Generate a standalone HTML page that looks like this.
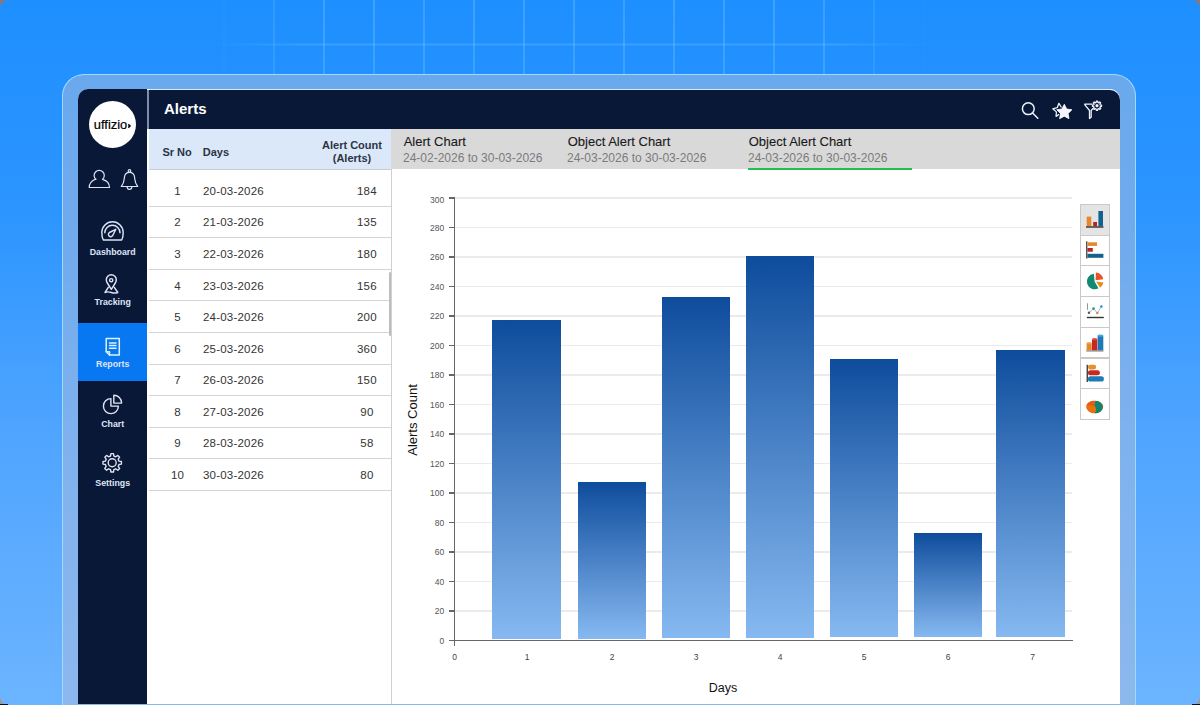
<!DOCTYPE html>
<html><head><meta charset="utf-8">
<style>
*{margin:0;padding:0;box-sizing:border-box}
html,body{width:1200px;height:705px;overflow:hidden}
body{position:relative;font-family:"Liberation Sans",sans-serif;background:linear-gradient(180deg,#1e8fff 0%,#2c95ff 30%,#4ea4ff 60%,#6cb4ff 100%)}
div,svg{position:absolute}
#grid{left:0;top:0;width:1200px;height:75px;
 background-image:linear-gradient(90deg,rgba(110,195,255,.36) 2px,transparent 2px),linear-gradient(0deg,rgba(110,195,255,.3) 2px,transparent 2px);
 background-size:50px 50px;background-position:23px 0,0 45.5px;
 -webkit-mask-image:linear-gradient(90deg,transparent 210px,#000 310px,#000 830px,transparent 935px)}
#card{left:62px;top:74px;width:1074px;height:700px;border-radius:22px;border:1px solid rgba(160,222,255,.95);background:rgba(165,188,222,.55)}
#app{left:78px;top:89px;width:1042px;height:640px;border-radius:10px;overflow:hidden;background:#fff}
#side{left:78px;top:89px;width:69.4px;height:620px;background:#0a1838;border-top-left-radius:10px}
#divv{left:147px;top:90px;width:2px;height:39px;background:#7f8ca8}
#head{left:149px;top:90px;width:971px;height:38.7px;background:#0a1838;border-top-right-radius:10px}
#title{left:164px;top:100px;color:#fff;font-size:15px;font-weight:bold}
#tbl{left:147px;top:129px;width:245px;height:600px;background:#fff;border-right:1px solid #d0d0d0}
#thead{left:149px;top:129px;width:242px;height:41px;background:#dbe8fa;border-bottom:1px solid #c8cdd4}
.th{font-size:11px;color:#2c3444;font-weight:bold}
.tnum{left:157.6px;width:40px;text-align:center;font-size:11.5px;letter-spacing:.2px;color:#333;line-height:14px;margin-top:-3.1px}
.tday{left:203px;font-size:11.5px;letter-spacing:.2px;color:#333;line-height:14px;margin-top:-3.1px}
.tcnt{left:336.9px;width:60px;text-align:center;font-size:11.5px;letter-spacing:.2px;color:#333;line-height:14px;margin-top:-3.1px}
.tline{left:149px;width:242px;height:1px;background:#d4d4d4}
#sb{left:388.5px;top:271.5px;width:2.6px;height:64px;background:#bdbdbd;border-radius:2px}
#tabs{left:391px;top:128.7px;width:729px;height:40px;background:#d9d9d9}
.tt{font-size:13px;color:#1a1a1a;-webkit-text-stroke:0.12px #1a1a1a;margin-left:0.7px}
.td{font-size:12px;color:#7b7b7b}
.lbl{color:#dfe5f6;font-size:8.8px;font-weight:bold;text-align:center;width:69px;left:78.2px;margin-top:0.9px}
.grid{left:455px;width:617px;height:1.5px;background:#ebebeb}
.tick{left:449px;width:6px;height:1.5px;background:#666}
.ylab{left:400px;width:44.3px;text-align:right;font-size:8.5px;color:#555;line-height:8px;margin-top:-3.5px}
.xlab{top:653.3px;width:40px;text-align:center;font-size:8.5px;color:#444;line-height:8px}
.bar{width:68.7px;background:linear-gradient(180deg,#0e4c9c,#86b9f1)}
#yaxis{left:453.7px;top:197px;width:1.8px;height:449px;background:#666}
#xaxis{left:449px;top:639.6px;width:623.5px;height:1.8px;background:#666}
#ytitle{left:372.5px;top:413px;width:80px;text-align:center;font-size:13px;color:#111;transform:rotate(-90deg);line-height:14px}
#xtitle{left:679px;top:680.5px;width:88px;text-align:center;font-size:12.5px;color:#111}
.ib{left:1080px;width:30px;height:31.7px;border:1px solid #c9c9c9;background:#fff}

</style></head><body>
<div id="grid"></div>
<div id="card"></div>
<div id="app"></div>
<div style="left:78px;top:703.5px;width:1042px;height:2px;background:#80b9f0;z-index:5"></div>
<div id="side"></div>
<div style="left:89px;top:101px;width:47px;height:47px;border-radius:50%;background:#fff"></div>
<div style="left:78px;top:323px;width:69px;height:58px;background:#0877f2"></div>
<div class="lbl" style="top:246px">Dashboard</div>
<div class="lbl" style="top:296.1px">Tracking</div>
<div class="lbl" style="top:358.1px">Reports</div>
<div class="lbl" style="top:418.4px">Chart</div>
<div class="lbl" style="top:477px">Settings</div>
<div id="divv"></div>
<div id="head"></div>
<div style="left:149px;top:89px;width:963px;height:1px;background:#d6ebff"></div>
<div id="title">Alerts</div>
<div id="tbl"></div>
<div id="thead"></div>
<div class="th" style="left:162.4px;top:146.2px">Sr No</div>
<div class="th" style="left:202.8px;top:146.2px">Days</div>
<div class="th" style="left:319px;top:139px;text-align:center;width:66px;line-height:13px">Alert Count<br>(Alerts)</div>
<div class="tnum" style="top:186.9px">1</div><div class="tday" style="top:186.9px">20-03-2026</div><div class="tcnt" style="top:186.9px">184</div><div class="tline" style="top:205.7px"></div>
<div class="tnum" style="top:218.48px">2</div><div class="tday" style="top:218.48px">21-03-2026</div><div class="tcnt" style="top:218.48px">135</div><div class="tline" style="top:237.28px"></div>
<div class="tnum" style="top:250.06px">3</div><div class="tday" style="top:250.06px">22-03-2026</div><div class="tcnt" style="top:250.06px">180</div><div class="tline" style="top:268.86px"></div>
<div class="tnum" style="top:281.64px">4</div><div class="tday" style="top:281.64px">23-03-2026</div><div class="tcnt" style="top:281.64px">156</div><div class="tline" style="top:300.44px"></div>
<div class="tnum" style="top:313.22px">5</div><div class="tday" style="top:313.22px">24-03-2026</div><div class="tcnt" style="top:313.22px">200</div><div class="tline" style="top:332.02px"></div>
<div class="tnum" style="top:344.8px">6</div><div class="tday" style="top:344.8px">25-03-2026</div><div class="tcnt" style="top:344.8px">360</div><div class="tline" style="top:363.6px"></div>
<div class="tnum" style="top:376.38px">7</div><div class="tday" style="top:376.38px">26-03-2026</div><div class="tcnt" style="top:376.38px">150</div><div class="tline" style="top:395.18px"></div>
<div class="tnum" style="top:407.96px">8</div><div class="tday" style="top:407.96px">27-03-2026</div><div class="tcnt" style="top:407.96px">90</div><div class="tline" style="top:426.76px"></div>
<div class="tnum" style="top:439.54px">9</div><div class="tday" style="top:439.54px">28-03-2026</div><div class="tcnt" style="top:439.54px">58</div><div class="tline" style="top:458.34px"></div>
<div class="tnum" style="top:471.12px">10</div><div class="tday" style="top:471.12px">30-03-2026</div><div class="tcnt" style="top:471.12px">80</div><div class="tline" style="top:489.92px"></div>
<div id="sb"></div>
<div id="tabs"></div>
<div class="tt" style="left:403px;top:134px">Alert Chart</div>
<div class="td" style="left:403px;top:151px">24-02-2026 to 30-03-2026</div>
<div class="tt" style="left:567px;top:134px">Object Alert Chart</div>
<div class="td" style="left:567px;top:151px">24-03-2026 to 30-03-2026</div>
<div class="tt" style="left:748px;top:134px">Object Alert Chart</div>
<div class="td" style="left:748px;top:151px">24-03-2026 to 30-03-2026</div>
<div style="left:748px;top:168px;width:164px;height:2px;background:#22c04a"></div>
<div class="tick" style="top:639.65px"></div>
<div class="ylab" style="top:640.4px">0</div>
<div class="grid" style="top:610.14px"></div>
<div class="tick" style="top:610.14px"></div>
<div class="ylab" style="top:610.89px">20</div>
<div class="grid" style="top:580.63px"></div>
<div class="tick" style="top:580.63px"></div>
<div class="ylab" style="top:581.38px">40</div>
<div class="grid" style="top:551.12px"></div>
<div class="tick" style="top:551.12px"></div>
<div class="ylab" style="top:551.87px">60</div>
<div class="grid" style="top:521.61px"></div>
<div class="tick" style="top:521.61px"></div>
<div class="ylab" style="top:522.36px">80</div>
<div class="grid" style="top:492.1px"></div>
<div class="tick" style="top:492.1px"></div>
<div class="ylab" style="top:492.85px">100</div>
<div class="grid" style="top:462.59px"></div>
<div class="tick" style="top:462.59px"></div>
<div class="ylab" style="top:463.34px">120</div>
<div class="grid" style="top:433.08px"></div>
<div class="tick" style="top:433.08px"></div>
<div class="ylab" style="top:433.83px">140</div>
<div class="grid" style="top:403.57px"></div>
<div class="tick" style="top:403.57px"></div>
<div class="ylab" style="top:404.32px">160</div>
<div class="grid" style="top:374.06px"></div>
<div class="tick" style="top:374.06px"></div>
<div class="ylab" style="top:374.81px">180</div>
<div class="grid" style="top:344.55px"></div>
<div class="tick" style="top:344.55px"></div>
<div class="ylab" style="top:345.3px">200</div>
<div class="grid" style="top:315.04px"></div>
<div class="tick" style="top:315.04px"></div>
<div class="ylab" style="top:315.79px">220</div>
<div class="grid" style="top:285.53px"></div>
<div class="tick" style="top:285.53px"></div>
<div class="ylab" style="top:286.28px">240</div>
<div class="grid" style="top:256.02px"></div>
<div class="tick" style="top:256.02px"></div>
<div class="ylab" style="top:256.77px">260</div>
<div class="grid" style="top:226.51px"></div>
<div class="tick" style="top:226.51px"></div>
<div class="ylab" style="top:227.26px">280</div>
<div class="grid" style="top:197.0px"></div>
<div class="tick" style="top:197.0px"></div>
<div class="ylab" style="top:199.05px">300</div>
<div class="bar" style="left:492px;top:319.5px;height:319.0px"></div>
<div class="bar" style="left:577.8px;top:482px;height:156.5px"></div>
<div class="bar" style="left:661.7px;top:297.2px;height:341.3px"></div>
<div class="bar" style="left:745.7px;top:256.3px;height:382.2px"></div>
<div class="bar" style="left:829.8px;top:358.7px;height:278.3px"></div>
<div class="bar" style="left:913.5px;top:532.5px;height:104.5px"></div>
<div class="bar" style="left:996.1px;top:349.7px;height:287.3px"></div>
<div class="xlab" style="left:434.5px">0</div>
<div class="xlab" style="left:507px">1</div>
<div class="xlab" style="left:592px">2</div>
<div class="xlab" style="left:676px">3</div>
<div class="xlab" style="left:760px">4</div>
<div class="xlab" style="left:844px">5</div>
<div class="xlab" style="left:928px">6</div>
<div class="xlab" style="left:1012.5px">7</div>
<div id="yaxis"></div>
<div id="xaxis"></div>
<div id="ytitle">Alerts Count</div>
<div id="xtitle">Days</div>
<div class="ib" style="top:204px;background:#e4e4e4"></div>
<div class="ib" style="top:234.7px"></div>
<div class="ib" style="top:265.4px"></div>
<div class="ib" style="top:296.1px"></div>
<div class="ib" style="top:326.8px"></div>
<div class="ib" style="top:357.5px"></div>
<div class="ib" style="top:388.2px"></div>
<svg width="1200" height="705" viewBox="0 0 1200 705" style="left:0;top:0">
 <!-- logo -->
 <text x="93.8" y="129" font-family="Liberation Sans" font-size="13.6" fill="#000" stroke="#000" stroke-width="0.22" textLength="33.4" lengthAdjust="spacingAndGlyphs">uffizio</text>
 <path d="M127.9,123.8 C129.6,124.4 130.6,125.1 130.9,125.9 C130.6,126.7 129.6,127.4 127.9,128 C128.5,126.7 128.5,125.1 127.9,123.8 Z" fill="#000"/>
 <g fill="none" stroke="#dde3f2" stroke-width="1.2" stroke-linejoin="round" stroke-linecap="round">
  <!-- user -->
  <path d="M95.9,179.4 A5.1,5.1 0 1 1 102.5,179.4 C106.5,180.5 109.5,183.5 109.5,187.5 L89.2,187.5 C89.2,183.5 92,180.5 95.9,179 Z"/>
  <!-- bell -->
  <circle cx="129.5" cy="171" r="1.3"/>
  <path d="M129.5,172.3 C132.3,172.3 134.3,174.2 134.6,177.4 C135,181 134.8,183 137.7,186.5 L121.3,186.5 C124.2,183 124,181 124.4,177.4 C124.7,174.2 126.7,172.3 129.5,172.3 Z"/>
  <path d="M127.2,187 A2.3,2.3 0 0 0 131.8,187"/>
 </g>
 <g fill="none" stroke="#dde3f2" stroke-width="1.45" stroke-linejoin="round" stroke-linecap="round" transform="translate(0,0.5)">
  <!-- gauge -->
  <path d="M103.3,239.5 C102,237 101.8,234.5 101.8,232 A10.7,10.7 0 0 1 123.2,232 C123.2,234.5 123,237 121.7,239.5 Z"/>
  <path d="M104.8,232.3 A7.6,7.6 0 0 1 120,232.3"/>
  <path d="M115.8,228.8 L112.6,235.2 A2.3,2.3 0 1 1 109.4,232 Z"/>
  <!-- pin -->
  <path d="M111.3,289.3 L107.3,283 C106.4,281.6 106.3,280.6 106.3,279.8 A5,5 0 0 1 116.3,279.8 C116.3,280.6 116.2,281.6 115.3,283 Z" transform="translate(0,-0.5)"/>
  <circle cx="111.2" cy="279.7" r="1.6"/>
  <path d="M108.3,286.8 L105,292 C107,291 109,291.2 111.3,292 C113.6,292.8 115.6,292.8 117.8,292 L114.3,286.8"/>
 </g>
 <g fill="none" stroke="#d9f3ff" stroke-width="1.5" stroke-linejoin="round" stroke-linecap="round">
  <!-- report doc -->
  <path d="M109.5,355 L119.3,355 L119.3,338.5 L106.2,338.5 L106.2,351.8 Z"/>
  <path d="M106.2,351.8 L109.5,351.8 L109.5,355"/>
  <path d="M109.5,343 L116,343 M109.5,345.6 L116,345.6 M109.5,348.3 L116,348.3"/>
 </g>
 <g fill="none" stroke="#dde3f2" stroke-width="1.4" stroke-linejoin="round" stroke-linecap="round">
  <!-- pie -->
  <path d="M110.9,398.6 A7.5,7.5 0 1 0 118.4,406.1 L110.9,406.1 Z"/>
  <path d="M113.8,395.3 A7.8,7.8 0 0 1 121.6,403.1 L113.8,403.1 Z"/>
  <!-- gear -->
  <path d="M118.99,461.11 L121.41,461.53 L121.41,464.07 L118.99,464.49 L118.20,466.41 L119.62,468.41 L117.81,470.22 L115.81,468.80 L113.89,469.59 L113.47,472.01 L110.93,472.01 L110.51,469.59 L108.59,468.80 L106.59,470.22 L104.78,468.41 L106.20,466.41 L105.41,464.49 L102.99,464.07 L102.99,461.53 L105.41,461.11 L106.20,459.19 L104.78,457.19 L106.59,455.38 L108.59,456.80 L110.51,456.01 L110.93,453.59 L113.47,453.59 L113.89,456.01 L115.81,456.80 L117.81,455.38 L119.62,457.19 L118.20,459.19Z"/>
  <circle cx="112.2" cy="462.8" r="4"/>
 </g>
 <!-- header icons -->
 <g fill="none" stroke="#eef2fb" stroke-width="1.5" stroke-linecap="round" stroke-linejoin="round">
  <circle cx="1028.3" cy="108.7" r="5.9"/>
  <path d="M1032.6,113 L1037.8,118.3"/>
  <path d="M1058.87,103.34 L1061.35,107.27 L1065.99,107.45 L1063.02,111.03 L1064.28,115.50 L1059.97,113.78 L1056.10,116.36 L1056.40,111.72 L1052.75,108.84 L1057.26,107.70Z" stroke-width="1.3"/>
 </g>
 <path d="M1064.30,104.20 L1066.65,108.96 L1071.91,109.73 L1068.10,113.44 L1069.00,118.67 L1064.30,116.20 L1059.60,118.67 L1060.50,113.44 L1056.69,109.73 L1061.95,108.96Z" fill="#f4f6fb" stroke="#0a1838" stroke-width="2.2" stroke-linejoin="round" paint-order="stroke"/>
 <path d="M1064.30,104.20 L1066.65,108.96 L1071.91,109.73 L1068.10,113.44 L1069.00,118.67 L1064.30,116.20 L1059.60,118.67 L1060.50,113.44 L1056.69,109.73 L1061.95,108.96Z" fill="#f4f6fb" stroke="#f4f6fb" stroke-width="0.7" stroke-linejoin="round"/>
 <g fill="none" stroke="#eef2fb" stroke-width="1.3" stroke-linejoin="round">
  <path d="M1084.3,104.2 L1092.5,104.2 M1084.3,104.2 L1089.5,110.5 L1089.5,118.5 L1091.2,117.2 L1091.2,110.5 L1093,108.3"/>
  <path transform="translate(0,0.7)" d="M1100.30,104.18 L1101.56,104.37 L1101.56,105.63 L1100.30,105.82 L1099.91,106.75 L1100.67,107.78 L1099.78,108.67 L1098.75,107.91 L1097.82,108.30 L1097.63,109.56 L1096.37,109.56 L1096.18,108.30 L1095.25,107.91 L1094.22,108.67 L1093.33,107.78 L1094.09,106.75 L1093.70,105.82 L1092.44,105.63 L1092.44,104.37 L1093.70,104.18 L1094.09,103.25 L1093.33,102.22 L1094.22,101.33 L1095.25,102.09 L1096.18,101.70 L1096.37,100.44 L1097.63,100.44 L1097.82,101.70 L1098.75,102.09 L1099.78,101.33 L1100.67,102.22 L1099.91,103.25Z"/>
 </g>
 <circle cx="1097" cy="105.7" r="1.6" fill="#eef2fb"/>
 <!-- chart type icons -->
 <g>
  <rect x="1086.7" y="216.6" width="4.6" height="9.6" fill="#e8862c"/>
  <rect x="1093.2" y="222" width="3.8" height="4.2" fill="#b8231e"/>
  <rect x="1098.4" y="211" width="4.6" height="15.2" fill="#13618c"/>
  <rect x="1086" y="226.3" width="17.5" height="1.4" fill="#333"/>
 </g>
 <g>
  <rect x="1086" y="241.3" width="1.4" height="17.2" fill="#555"/>
  <rect x="1087.4" y="242.3" width="9.6" height="3.6" fill="#e8862c"/>
  <rect x="1087.4" y="248" width="5.4" height="3.7" fill="#b8231e"/>
  <rect x="1087.4" y="253.8" width="16" height="4" fill="#13618c"/>
 </g>
 <g>
  <path d="M1094.6,281.5 L1093.92,273.73 A7.8,7.8 0 1 0 1098.5,288.25 Z" fill="#128a72"/>
  <path d="M1095.6,280.2 L1095.87,272.6 A7.6,7.6 0 0 1 1103.13,279.14 Z" fill="#e8532a"/>
  <path d="M1096.2,281.6 L1103.43,282.62 A7.3,7.3 0 0 1 1100.07,287.79 Z" fill="#e88a1c"/>
 </g>
 <g>
  <rect x="1086.8" y="316.8" width="17" height="1.4" fill="#333"/>
  <rect x="1087.1" y="303.3" width="0.9" height="6.5" fill="#888"/>
  <polyline points="1089,312.8 1093.5,308.6 1097.3,313 1101.4,306.5" fill="none" stroke="#6cb3d9" stroke-width="0.8"/>
  <circle cx="1089" cy="312.8" r="1.2" fill="#555"/>
  <circle cx="1093.5" cy="308.6" r="1.3" fill="#1aa06a"/>
  <circle cx="1097.3" cy="313" r="1.3" fill="#e8862c"/>
  <circle cx="1101.4" cy="306.5" r="1.3" fill="#2b8fcc"/>
 </g>
 <g>
  <rect x="1086.6" y="343.2" width="5.1" height="7.3" fill="#e8862c"/>
  <ellipse cx="1089.15" cy="343.2" rx="2.55" ry="1.1" fill="#f3a45a"/>
  <rect x="1092" y="339.2" width="5.3" height="11.3" fill="#c8281f"/>
  <ellipse cx="1094.65" cy="339.2" rx="2.65" ry="1.1" fill="#e25040"/>
  <rect x="1097.6" y="335.6" width="5.7" height="14.9" fill="#1e79b5"/>
  <ellipse cx="1100.45" cy="335.6" rx="2.85" ry="1.2" fill="#48a8e0"/>
  <rect x="1086.2" y="350.5" width="17.2" height="1" fill="#777"/>
 </g>
 <g>
  <rect x="1086.6" y="364.8" width="1.3" height="17.2" fill="#333"/>
  <rect x="1087.9" y="364.8" width="8.3" height="4.6" rx="2.3" fill="#e8902c"/>
  <rect x="1087.9" y="370.3" width="12" height="5" rx="2.5" fill="#c8281f"/>
  <rect x="1087.9" y="376.2" width="16" height="5.4" rx="2.7" fill="#1e79b5"/>
 </g>
 <g>
  <ellipse cx="1094.7" cy="407" rx="8.5" ry="6.3" fill="#e8700f"/>
  <path d="M1095.6,400.7 A7.6,6.3 0 0 1 1094.7,413.3 C1096.4,411 1096.4,409 1095.2,406.8 C1094.2,404.8 1094.5,402.6 1095.6,400.7 Z" fill="#11836f"/>
  <path d="M1086.6,405 A8.5,6.3 0 0 1 1094.2,400.8 C1093.3,402.5 1093.4,404.5 1094.5,406 Z" fill="#e55a14"/>
 </g>
</svg>
<div style="left:0;top:0;width:8px;height:8px;background:radial-gradient(circle at 100% 100%,transparent 7px,#85797f 8.5px);z-index:9"></div>
<div style="left:1192px;top:0;width:8px;height:8px;background:radial-gradient(circle at 0% 100%,transparent 7px,#85797f 8.5px);z-index:9"></div>
<div style="left:0;top:697px;width:8px;height:8px;background:radial-gradient(circle at 100% 0%,transparent 7px,#9a9aa0 8.5px);z-index:9"></div>
<div style="left:1192px;top:697px;width:8px;height:8px;background:radial-gradient(circle at 0% 0%,transparent 7px,#9a9aa0 8.5px);z-index:9"></div>
<div style="left:0;top:704px;width:8px;height:1px;background:#111;z-index:9"></div>
<div style="left:1192px;top:704px;width:8px;height:1px;background:#111;z-index:9"></div>

</body></html>
